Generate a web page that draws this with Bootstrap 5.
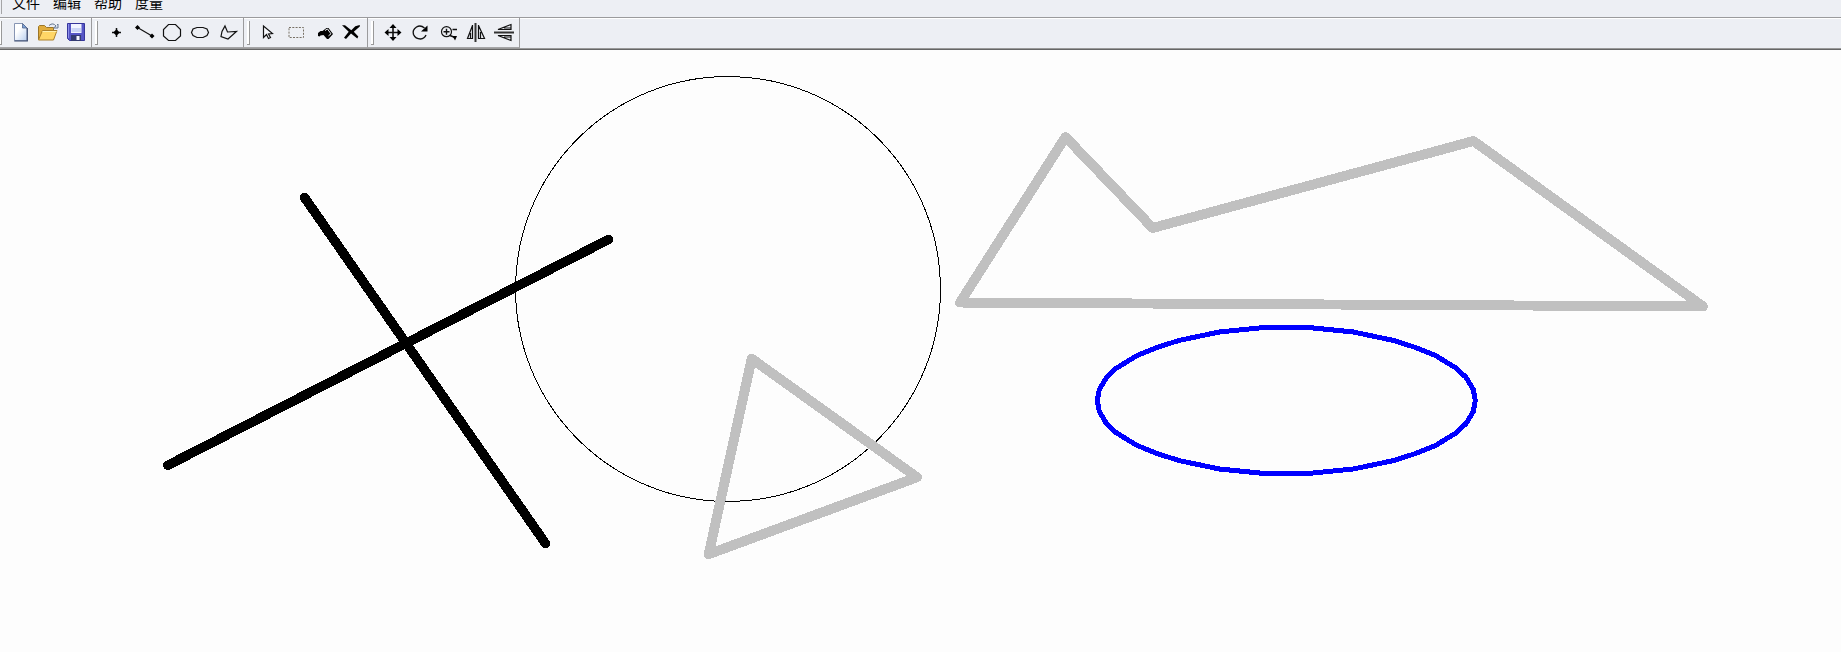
<!DOCTYPE html>
<html lang="zh-CN">
<head>
<meta charset="utf-8">
<title>绘图</title>
<link href="https://cdn.jsdelivr.net/npm/bootstrap@5.3.0/dist/css/bootstrap.min.css" rel="stylesheet">
<style>
body{background:#fdfdfd;color:#000;font-family:"Noto Sans CJK SC",sans-serif;height:652px}
.chrome-bg{background-color:#edeff4}
.menu-row{height:17px}
.menu-row .grip{height:14px;width:2px;margin-right:10px;border-right:1px solid #a5a5a7}
.menu-row a{font-size:14px;line-height:20px;color:#000;text-decoration:none;width:28px;margin-right:13px;margin-top:-8px;white-space:nowrap}
.tool-row{height:33px;border-top:1px solid #9b9b9d;border-bottom:1px solid #666;box-shadow:inset 0 1px #fff,inset 0 -1px #999}
.band{height:30px;padding-right:1px;border-right:1px solid #9b9b9d;border-bottom:1px solid #a5a5a7}
.grip-cell{width:10px;padding:3px 0 2px 3px}
.grip-cell i{display:block;width:3px;height:24px;background:#fff;border-right:1px solid #999;border-bottom:1px solid #999}
.band.first .grip-cell{width:6px;padding-left:0}
.band.first .grip-cell i{width:2px}
.tool{width:28px;height:29px;border:0;border-radius:0}
.tool svg{display:block}
.k{fill:none;stroke:#111;stroke-width:1.2}
.f{fill:#000}
.drawing{display:block;shape-rendering:crispEdges}
</style>
</head>
<body class="d-flex flex-column overflow-hidden m-0">
<header class="chrome-bg flex-shrink-0">
 <nav class="menu-row d-flex align-items-start overflow-hidden">
  <span class="grip"></span>
  <a href="#">文件</a><a href="#">编辑</a><a href="#">帮助</a><a href="#">度量</a>
 </nav>
 <div class="tool-row d-flex" role="toolbar">
  <div class="band first d-flex"><span class="grip-cell"><i></i></span>
   <button class="tool btn p-0" aria-label="新建"><svg width="28" height="29" viewBox="6 18 28 29"><defs><linearGradient id="pg" x2="1" y2="1"><stop offset=".35" stop-color="#fff"/><stop offset="1" stop-color="#b9cff0"/></linearGradient></defs><path d="M14.5 23.5h8l4.5 4.5v12.500h-12.500z" fill="url(#pg)" stroke="#8795b3"/><path d="M27.300 28v13h-13" fill="none" stroke="#3d4c70" stroke-width="1.200"/><path d="M22.500 23.500v4.500h4.500z" fill="#7fa4d8" stroke="#53658b" stroke-width=".8"/></svg></button>
   <button class="tool btn p-0" aria-label="打开"><svg width="28" height="29" viewBox="34 18 28 29"><path d="M38.500 39.500V26.500l1-1h5l2 2h7v4" fill="#e0ac3c" stroke="#9c7628"/><path d="M38.500 40l4-9.500H57L53.500 40z" fill="#ffd666" stroke="#ad812a"/><path d="M42.500 31.500h14" stroke="#fff0ad"/><path d="M49 25.500q4-3.500 7 .5l-2.500 2h4.500v-4l-1 1" fill="#d9e1ed" stroke="#697991" stroke-width="1"/></svg></button>
   <button class="tool btn p-0" aria-label="保存"><svg width="28" height="29" viewBox="62 18 28 29"><path d="M67.500 23.500h17v17h-15l-2-2z" fill="#5656c6" stroke="#36369b"/><path d="M71 24h10.500v9H71z" fill="#f1f4ff"/><path d="M71.500 28h9.500v4h-9.500z" fill="#cbd5f5"/><path d="M71 35h10v6H71z" fill="#343b72"/><path d="M76.500 36h3v4h-3z" fill="#f5f7ff"/><path d="M68.500 24v14" stroke="#8c8fe9"/></svg></button>
  </div>
  <div class="band d-flex"><span class="grip-cell"><i></i></span>
   <button class="tool btn p-0" aria-label="点"><svg width="28" height="29" viewBox="102 18 28 29"><path class="k" d="M112 32.500h9M116.500 28v9" style="stroke-width:1.500"/><path class="f" d="M113.300 32.500l3.200-3.200 3.200 3.200-3.200 3.200z"/></svg></button>
   <button class="tool btn p-0" aria-label="线段"><svg width="28" height="29" viewBox="130 18 28 29"><path class="k" d="M137.500 27.500l14.500 8.500"/><path class="f" d="M135 27.500l2.500-2.500 2.500 2.500-2.500 2.500zM149.500 36l2.500-2.500 2.500 2.500-2.500 2.500z"/></svg></button>
   <button class="tool btn p-0" aria-label="圆"><svg width="28" height="29" viewBox="158 18 28 29"><path class="k" d="M168.500 24.500h7l5 5v6.500l-5 4.500h-7l-5-4.500v-6.500z"/></svg></button>
   <button class="tool btn p-0" aria-label="椭圆"><svg width="28" height="29" viewBox="186 18 28 29"><path class="k" d="M197 27.500h6l4 1.500 1.500 3.500-1.500 3-4 2h-6l-4-2-1.500-3 1.500-3.500z"/></svg></button>
   <button class="tool btn p-0" aria-label="多边形"><svg width="28" height="29" viewBox="214 18 28 29"><path class="k" d="M225 26l2.500 6 9-.5-8.500 7.500-7-2.500 1-5z"/></svg></button>
  </div>
  <div class="band d-flex"><span class="grip-cell"><i></i></span>
   <button class="tool btn p-0" aria-label="选择"><svg width="28" height="29" viewBox="254 18 28 29"><path class="k" d="M263.500 26v11.500l3-3 2 4 2-1-2-3.500 4-.5z" style="fill:#f8f9fd"/></svg></button>
   <button class="tool btn p-0" aria-label="框选"><svg width="28" height="29" viewBox="282 18 28 29"><path d="M289 27.500h14.500v10H289z" fill="none" stroke="#777064" stroke-dasharray="2 1.300"/></svg></button>
   <button class="tool btn p-0" aria-label="填充"><svg width="28" height="29" viewBox="310 18 28 29"><path class="f" d="M318 36v-3l2.500-2h2l4-3h2l4.500 6-4.500 5h-1.500l-3.500-4-3 .5-1 1z"/><path d="M325 30.500l2.500-1.500 3.500 4.800-2.500 2" fill="none" stroke="#f1f2f5" stroke-width="1"/></svg></button>
   <button class="tool btn p-0" aria-label="删除"><svg width="28" height="29" viewBox="338 18 28 29"><path class="f" d="M342 25.300h3l6.300 5 4-4 4.500-1.200v1.500l-6 5.200 4.500 4.700-1 2-6.300-5-5 5.500-2-1.200 4.700-6z"/></svg></button>
  </div>
  <div class="band d-flex"><span class="grip-cell"><i></i></span>
   <button class="tool btn p-0" aria-label="移动"><svg width="28" height="29" viewBox="378 18 28 29"><path class="k" d="M386 32.500h14M393 26v13" style="stroke-width:1.600"/><path class="f" d="M384.500 32.500l4-3.500v7zM401.500 32.500l-4-3.500v7zM393 24l-3.500 4h7zM393 41l-3.500-4h7z"/></svg></button>
   <button class="tool btn p-0" aria-label="旋转"><svg width="28" height="29" viewBox="406 18 28 29"><path class="k" d="M424.500 28q-4-3.500-8-1-4.500 3-3 7.500 2 4.500 7 4.500 4-.5 5.500-4" style="stroke-width:1.400"/><path class="f" d="M427.500 25.500v6h-6.500z"/></svg></button>
   <button class="tool btn p-0" aria-label="缩放"><svg width="28" height="29" viewBox="434 18 28 29"><circle class="k" cx="446.500" cy="31.700" r="5"/><path class="k" d="M443.500 31.700h6M446.500 28.700v6M452.500 29.500h4.500M450 35.500l5 2" style="stroke-width:1.400"/><path class="f" d="M452.500 36h4.500l-2 4.500z"/></svg></button>
   <button class="tool btn p-0" aria-label="水平翻转"><svg width="28" height="29" viewBox="462 18 28 29"><path d="M475.500 23v19" stroke="#333" stroke-width="2"/><path class="k" d="M472.500 25v13.500h-5l5-13M478.500 25v13.500h6l-6-13M470.500 33v5M480.500 32v6"/></svg></button>
   <button class="tool btn p-0" aria-label="垂直翻转"><svg width="28" height="29" viewBox="490 18 28 29"><path d="M494 32.500h20" stroke="#333" stroke-width="2"/><path class="k" d="M498 29.500h13v-5zM498 35.500h13v5zM504 28h7M504 37h7"/></svg></button>
  </div>
 </div>
</header>
<main class="flex-grow-1">
 <svg class="drawing" width="1841" height="602" viewBox="0 50 1841 602" fill="none" stroke-linecap="round" stroke-linejoin="round">
  <circle cx="728" cy="289" r="212.500" stroke="#000"/>
  <g stroke="#000" stroke-width="9.500"><path d="M167.800 465.300L608.500 239.500"/><path d="M304.500 197.500L545.500 543.500"/></g>
  <g stroke="#c0c0c0" stroke-width="9.900"><path d="M751.700 358.700L917 477.300 708.700 554.200z"/><path d="M960 302.550L1065.500 137 1152.700 228 1473.500 141 1703 306.450z"/></g>
  <path stroke="#00f" stroke-width="5" d="M1097.300 400.500L1099.300 389.500 1106.300 377.700 1116.300 368.200 1136.800 355.700 1157.300 347.400 1178.800 340.500 1219.300 332 1264.300 327.500H1308.300L1353.300 332 1393.800 340.500 1415.300 347.400 1435.800 355.700 1456.300 368.200 1466.300 377.700 1473.300 389.500 1475.300 400.500 1473.300 411.500 1466.300 423.300 1456.300 432.800 1435.800 445.300 1415.300 453.600 1393.800 460.500 1353.300 469 1308.300 473.500H1264.300L1219.300 469 1178.800 460.500 1157.300 453.600 1136.800 445.300 1116.300 432.800 1106.300 423.300 1099.300 411.500z"/>
 </svg>
</main>
<script src="https://cdn.jsdelivr.net/npm/bootstrap@5.3.0/dist/js/bootstrap.bundle.min.js"></script>
</body>
</html>
